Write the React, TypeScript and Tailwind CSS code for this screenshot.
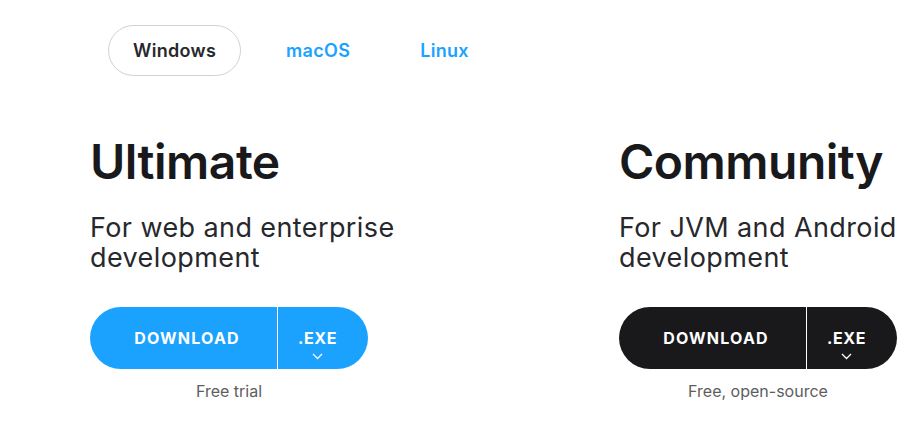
const tabs = ["Windows", "macOS", "Linux"];

const editions = [
	{
		name: "Ultimate",
		text: ["For web and enterprise", "development"],
		note: "Free trial",
		dark: false,
	},
	{
		name: "Community",
		text: ["For JVM and Android", "development"],
		note: "Free, open-source",
		dark: true,
	},
];

export default function App() {
	return (
		<div className="h-[432px] w-[916px] overflow-hidden bg-white font-['Inter',sans-serif] text-[#19191c]">
			{/* вкладки платформ */}
			<div className="ml-[108px] flex gap-5 pt-[25px]">
				{tabs.map((t, i) => (
					<button
						key={t}
						type="button"
						className={
							i === 0
								? "h-[51px] rounded-full border border-[#d1d1d2] px-6 text-[18px] font-semibold tracking-[0.3px] text-[#27282c]"
								: "h-[51px] rounded-full border border-transparent px-6 text-[18px] font-semibold tracking-[0.3px] text-[#1ba2ff]"
						}
					>
						{t}
					</button>
				))}
			</div>

			<div className="flex pl-[90px] pt-[58px]">
				{editions.map((e) => (
					<div key={e.name} className="w-[529px] shrink-0">
						<h2 className="text-[48px] font-semibold leading-[56px] tracking-[-0.5px]">{e.name}</h2>
						<div className="mt-[23px] text-[27px] leading-[30px] tracking-[0.4px] text-[#27282c]">
							<p>{e.text[0]}</p>
							<p>{e.text[1]}</p>
						</div>
						<div className="mt-[34px] w-[278px]">
							<div
								className={
									e.dark
										? "flex h-[62px] overflow-hidden rounded-full bg-[#19191c] text-white"
										: "flex h-[62px] overflow-hidden rounded-full bg-[#1ba2ff] text-white"
								}
							>
								<span className="flex w-[188px] items-center justify-center border-r border-white pl-[7px] text-[16px] font-bold tracking-[1.2px]">
									DOWNLOAD
								</span>
								<span className="flex flex-1 flex-col items-center pr-[11px] pt-[22px]">
									<span className="text-[16px] font-bold leading-[18px] tracking-[0.6px]">.EXE</span>
									<svg className="mt-[6px]" width="11" height="7" viewBox="0 0 11 7" fill="none">
										<path d="M1 1l4.5 4.5L10 1" stroke="currentColor" strokeWidth="1.3" />
									</svg>
								</span>
							</div>
							<p className="mt-[10px] text-center text-[16px] text-[#5d5d61]">{e.note}</p>
						</div>
					</div>
				))}
			</div>
		</div>
	);
}
